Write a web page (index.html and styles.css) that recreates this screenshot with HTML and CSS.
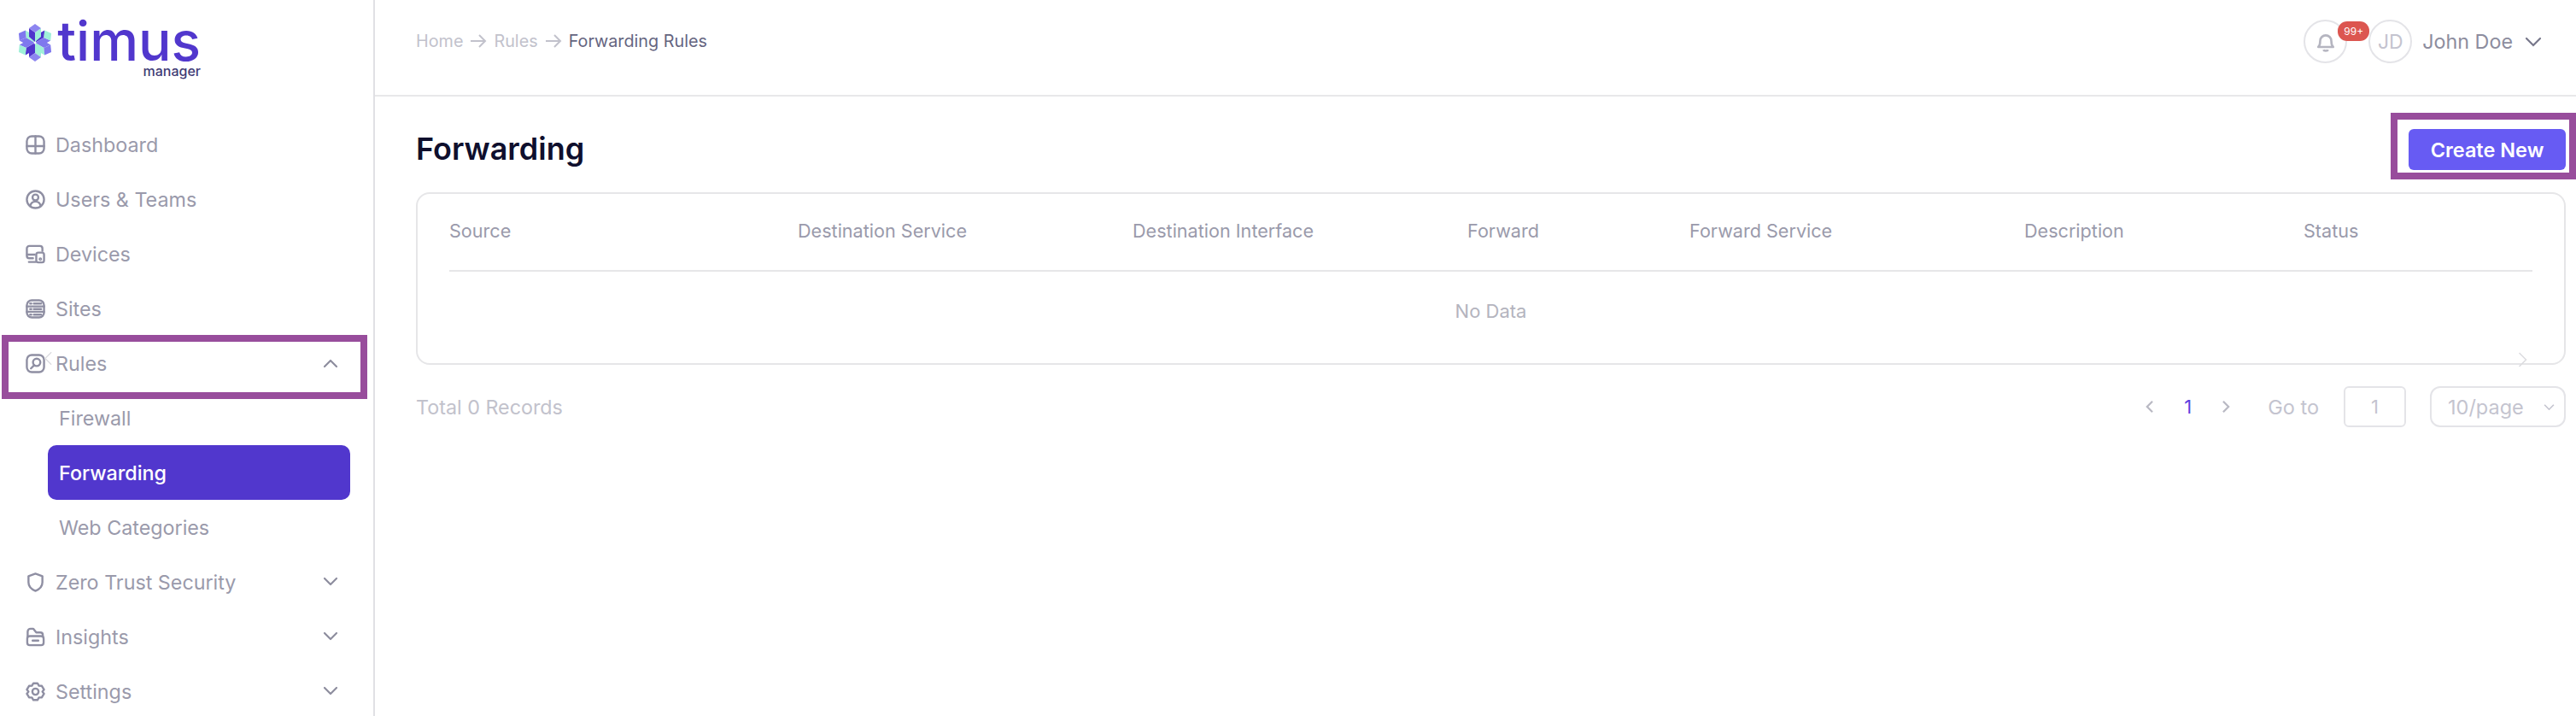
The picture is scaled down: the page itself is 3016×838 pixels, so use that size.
FILE: index.html
```html
<!DOCTYPE html>
<html lang="en">
<head>
<meta charset="utf-8">
<title>Forwarding Rules</title>
<link rel="stylesheet" href="styles.css">
</head>
<body>
<div class="app">
  <aside class="sidebar">
    <div class="logo">
      <svg class="logo-mark" viewBox="-22 -22 44 44">
        <defs>
          <g id="a-arm"><polygon points="0,-1 -7,-7 -7,-17 0,-12" fill="#4f35cc"/><polygon points="0,-1 7,-7 7,-17 0,-12" fill="#9ff0d8"/><polygon points="0,-12 -7,-17 0,-22 7,-17" fill="#8d86f0"/></g>
          <g id="b-arm"><polygon points="0,-1 -7,-7 -7,-17 0,-12" fill="#4f35cc"/><polygon points="0,-1 7,-7 7,-17 0,-12" fill="#7f78ee"/><polygon points="0,-12 -7,-17 0,-22 7,-17" fill="#9ff0d8"/></g>
          <g id="c-arm"><polygon points="0,-1 -7,-7 -7,-17 0,-12" fill="#7f78ee"/><polygon points="0,-1 7,-7 7,-17 0,-12" fill="#9ff0d8"/><polygon points="0,-12 -7,-17 0,-22 7,-17" fill="#7f78ee"/></g>
        </defs>
        <use href="#b-arm" transform="rotate(60)"/>
        <use href="#c-arm" transform="rotate(120)"/>
        <use href="#a-arm" transform="rotate(180) scale(-1 1)"/>
        <use href="#b-arm" transform="rotate(240)"/>
        <use href="#c-arm" transform="rotate(300)"/>
        <use href="#a-arm"/>
      </svg>
      <div class="logo-words">
        <span class="logo-name">timus</span>
        <span class="logo-sub">manager</span>
      </div>
    </div>
    <nav class="nav">
      <a class="nav-item">
        <svg class="nav-icon" viewBox="0 0 24 24"><rect x="1.500" y="1.500" width="21" height="21" rx="6"/><path d="M12 1.500v21M1.500 13.500h21"/></svg>
        <span>Dashboard</span>
      </a>
      <a class="nav-item">
        <svg class="nav-icon" viewBox="0 0 24 24"><circle cx="12" cy="12" r="10.500"/><circle cx="12" cy="9.500" r="3.600"/><path d="M5.500 20c1-4 3.500-5.500 6.500-5.500s5.500 1.500 6.500 5.500"/></svg>
        <span>Users &amp; Teams</span>
      </a>
      <a class="nav-item">
        <svg class="nav-icon" viewBox="0 0 24 24"><path d="M9 17H4.500a3 3 0 0 1-3-3V5a3 3 0 0 1 3-3h13a3 3 0 0 1 3 3v3"/><path d="M2 12.500h9M4 21.500h8"/><rect x="13" y="10" width="9.500" height="12" rx="2.500"/><circle cx="18" cy="18" r=".8"/></svg>
        <span>Devices</span>
      </a>
      <a class="nav-item">
        <svg class="nav-icon" viewBox="0 0 24 24"><rect x="1.500" y="1.500" width="21" height="21" rx="6"/><path d="M1.500 9h21M1.500 15.500h21M5.500 5.500h1.500M10 5.500h9M5.500 12.200h1.500M10 12.200h9M5.500 19h1.500M10 19h9"/></svg>
        <span>Sites</span>
      </a>
      <div class="nav-item is-marked">
        <svg class="nav-icon" viewBox="0 0 24 24"><rect x="1.500" y="1.500" width="21" height="21" rx="6"/><circle cx="13.500" cy="10.500" r="4.500"/><path d="M10.500 14 6.500 18"/></svg>
        <span>Rules</span>
        <svg class="chev" viewBox="0 0 20 12"><path d="M3 10l7-7 7 7"/></svg>
        <svg class="collapse" viewBox="0 0 12 20"><path d="M10 2 2 10l8 8"/></svg>
      </div>
      <a class="nav-sub">Firewall</a>
      <a class="nav-sub is-active">Forwarding</a>
      <a class="nav-sub">Web Categories</a>
      <a class="nav-item">
        <svg class="nav-icon" viewBox="0 0 24 24"><path d="M12 1.500 20.500 4.500V12c0 5.500-3.500 8.500-8.500 10.500C7 20.500 3.500 17.500 3.500 12V4.500z"/></svg>
        <span>Zero Trust Security</span>
        <svg class="chev" viewBox="0 0 20 12"><path d="M3 2l7 7 7-7"/></svg>
      </a>
      <a class="nav-item">
        <svg class="nav-icon" viewBox="0 0 24 24"><path d="M2.500 11V5.500a3.500 3.500 0 0 1 3.500-3.500h3.500L13 6.500h5a3 3 0 0 1 3 3V11"/><rect x="2" y="11" width="20" height="11" rx="3"/><path d="M8.500 16.500h7"/></svg>
        <span>Insights</span>
        <svg class="chev" viewBox="0 0 20 12"><path d="M3 2l7 7 7-7"/></svg>
      </a>
      <a class="nav-item">
        <svg class="nav-icon" viewBox="0 0 24 24"><path d="M9.500 1.800h5l1.800 3 3.500.2 2.700 4.500-2 2.500 2 2.500-2.700 4.500-3.500.2-1.800 3h-5l-1.800-3-3.500-.2L1.500 14.500l2-2.500-2-2.500L4.200 5l3.500-.2z"/><circle cx="12" cy="12" r="3.800"/></svg>
        <span>Settings</span>
        <svg class="chev" viewBox="0 0 20 12"><path d="M3 2l7 7 7-7"/></svg>
      </a>
    </nav>
  </aside>
  <main class="main">
    <header class="topbar">
      <div class="crumbs">
        <span>Home</span>
        <svg class="crumb-arrow" viewBox="0 0 20 16"><path d="M1 8h17M11 1l7 7-7 7"/></svg>
        <span>Rules</span>
        <svg class="crumb-arrow" viewBox="0 0 20 16"><path d="M1 8h17M11 1l7 7-7 7"/></svg>
        <span class="crumb-current">Forwarding Rules</span>
      </div>
      <div class="user">
        <div class="round bell">
          <svg class="bell-icon" viewBox="0 0 20 22"><path d="M2 16.500c1.500-1.500 2-3 2-6.500a6 6 0 0 1 12 0c0 3.500.5 5 2 6.500z"/><path d="M7.500 19.500c.5 1.500 4.500 1.500 5 0"/></svg>
          <span class="badge">99+</span>
        </div>
        <div class="round initials">JD</div>
        <span class="user-name">John Doe</span>
        <svg class="user-chev" viewBox="0 0 20 12"><path d="M2 2l8 8 8-8"/></svg>
      </div>
    </header>
    <section class="content">
      <div class="title-row">
        <h1>Forwarding</h1>
        <div class="create-wrap"><button class="create">Create New</button></div>
      </div>
      <div class="card">
        <div class="table-head">
          <span>Source</span>
          <span>Destination Service</span>
          <span>Destination Interface</span>
          <span>Forward</span>
          <span>Forward Service</span>
          <span>Description</span>
          <span>Status</span>
        </div>
        <div class="empty">No Data</div>
        <svg class="scroll-next" viewBox="0 0 12 20"><path d="M2 2l8 8-8 8"/></svg>
      </div>
      <div class="foot">
        <span class="total">Total 0 Records</span>
        <div class="pager">
          <svg class="page-arrow" viewBox="0 0 12 18"><path d="M10 2 3 9l7 7"/></svg>
          <span class="page-num">1</span>
          <svg class="page-arrow" viewBox="0 0 12 18"><path d="M2 2l7 7-7 7"/></svg>
          <span class="goto">Go to</span>
          <span class="page-input">1</span>
          <span class="page-size">10/page<svg class="size-chev" viewBox="0 0 16 10"><path d="M2 2l6 6 6-6"/></svg></span>
        </div>
      </div>
    </section>
  </main>
</div>
</body>
</html>
```

FILE: styles.css
```css
*, *::before, *::after { box-sizing: border-box; }
html, body { margin: 0; padding: 0; height: 100%; background: #fff; overflow: hidden; }
body { font-family: Inter, "Noto Sans", "Liberation Sans", sans-serif; color: #9a9aab; }

.app { display: flex; height: 838px; }

/* Sidebar */
.sidebar { width: 439px; flex: none; border-right: 2px solid #e0e0e4; }
.logo { display: flex; align-items: flex-start; gap: 7px; height: 137px; padding: 22px 0 0 19px; }
.logo-mark { width: 44px; height: 44px; margin-top: 6px; flex: none; }
.logo-words { display: flex; flex-direction: column; align-items: flex-end; width: 165px; }
.logo-name { display: block; font-size: 64px; line-height: 52px; font-weight: 500; color: #5137cd; height: 53px; }
.logo-sub { display: block; font-size: 16px; line-height: 16px; font-weight: 500; color: #3f3b75; }

.nav { display: flex; flex-direction: column; }
.nav-item, .nav-sub { display: flex; align-items: center; height: 64px; font-size: 23.3px; color: #9a9aab; position: relative; }
.nav-item { padding: 0 40px 0 30px; gap: 12px; }
.nav-item .chev { margin-left: auto; }
.nav-icon { width: 23px; height: 23px; flex: none; fill: none; stroke: #8f8fa3; stroke-width: 2.500; stroke-linejoin: round; stroke-linecap: round; }
.chev { width: 20px; height: 12px; fill: none; stroke: #8d8d9e; stroke-width: 2.200; stroke-linecap: round; stroke-linejoin: round; }
.collapse { position: absolute; left: 51px; top: 17px; width: 11px; height: 19px; fill: none; stroke: #dcdce0; stroke-width: 1.500; }

.is-marked::after { content: ""; position: absolute; left: 2px; top: -1px; width: 428px; height: 75px; border: 8px solid #984d9c; pointer-events: none; }

.nav-sub { margin-left: 56px; width: 354px; padding-left: 13px; border-radius: 10px; }
.is-active { background: #5137cd; color: #fff; font-weight: 500; }

/* Main */
.main { flex: 1; min-width: 0; display: flex; flex-direction: column; }
.topbar { height: 113px; flex: none; display: flex; justify-content: space-between; border-bottom: 2px solid #e8e8ea; padding: 23px 40px 0 48px; }
.crumbs { display: flex; align-items: center; gap: 8px; height: 50px; font-size: 19.800px; color: #c2c2cc; }
.crumb-arrow { width: 20px; height: 16px; fill: none; stroke: #c2c2cc; stroke-width: 2; }
.crumb-current { color: #65657f; }

.user { display: flex; align-items: center; height: 51px; }
.round { width: 51px; height: 51px; border-radius: 50%; border: 2px solid #e4e4e8; display: flex; align-items: center; justify-content: center; position: relative; background: #fff; }
.bell { margin-right: 25px; }
.bell-icon { width: 22px; height: 24px; fill: none; stroke: #b5b5c0; stroke-width: 2.400; stroke-linejoin: round; }
.badge { position: absolute; left: 38px; top: 0; width: 37px; height: 23px; border-radius: 11px; background: #dc5650; color: #fff; font-size: 12px; line-height: 23px; text-align: center; }
.initials { font-size: 23px; color: #c4c4cf; }
.user-name { font-size: 23.3px; margin-left: 12px; color: #8d8d9e; }
.user-chev { width: 20px; height: 12px; margin-left: 14px; fill: none; stroke: #77778b; stroke-width: 2.200; stroke-linecap: round; }

.content { padding: 0 12px 0 48px; }
.title-row { display: flex; justify-content: space-between; align-items: center; height: 112px; }
h1 { margin: 9px 0 0; font-size: 36px; font-weight: 600; color: #0f0f2d; }
.create-wrap { width: 217px; height: 78px; margin: 4px -12px 0 0; border: 8px solid #984d9c; padding: 11px 4px 0 13px; }
.create { display: block; width: 184px; height: 48px; border: 0; border-radius: 6px; background: #675bf3; color: #fff; font: 600 23.500px Inter, "Noto Sans", sans-serif; padding: 0; }

.card { position: relative; height: 202px; border: 2px solid #e6e6e8; border-radius: 16px; padding: 0 37px; }
.table-head { display: grid; grid-template-columns: 408px 392px 392px 260px 392px 327px 1fr; align-items: center; height: 91px; padding-bottom: 3px; border-bottom: 2px solid #e6e6e8; font-size: 21.600px; color: #9a9aab; }
.empty { text-align: center; height: 92px; line-height: 92px; font-size: 22px; color: #b4b4be; }
.scroll-next { position: absolute; right: 42px; top: 184px; width: 13px; height: 20px; fill: none; stroke: #dcdce0; stroke-width: 1.500; }

.foot { display: flex; justify-content: space-between; align-items: center; height: 50px; margin-top: 24px; }
.total { font-size: 23.300px; color: #c2c2cc; }
.pager { display: flex; align-items: center; font-size: 23.500px; color: #c4c4cf; }
.page-arrow { width: 11px; height: 16px; fill: none; stroke: #b9b9c3; stroke-width: 2.500; }
.page-num { color: #5c3fe0; font-size: 22px; width: 79px; text-align: center; }
.goto { margin-left: 43px; }
.page-input { width: 73px; height: 48px; border: 2px solid #e4e4e8; border-radius: 6px; margin-left: 29px; display: flex; align-items: center; justify-content: center; font-size: 22px; }
.page-size { width: 159px; height: 48px; border: 2px solid #e4e4e8; border-radius: 12px; margin-left: 28px; padding: 0 10px 0 19px; display: flex; align-items: center; justify-content: space-between; }
.size-chev { width: 15px; height: 9px; fill: none; stroke: #c4c4cf; stroke-width: 1.800; }
```
